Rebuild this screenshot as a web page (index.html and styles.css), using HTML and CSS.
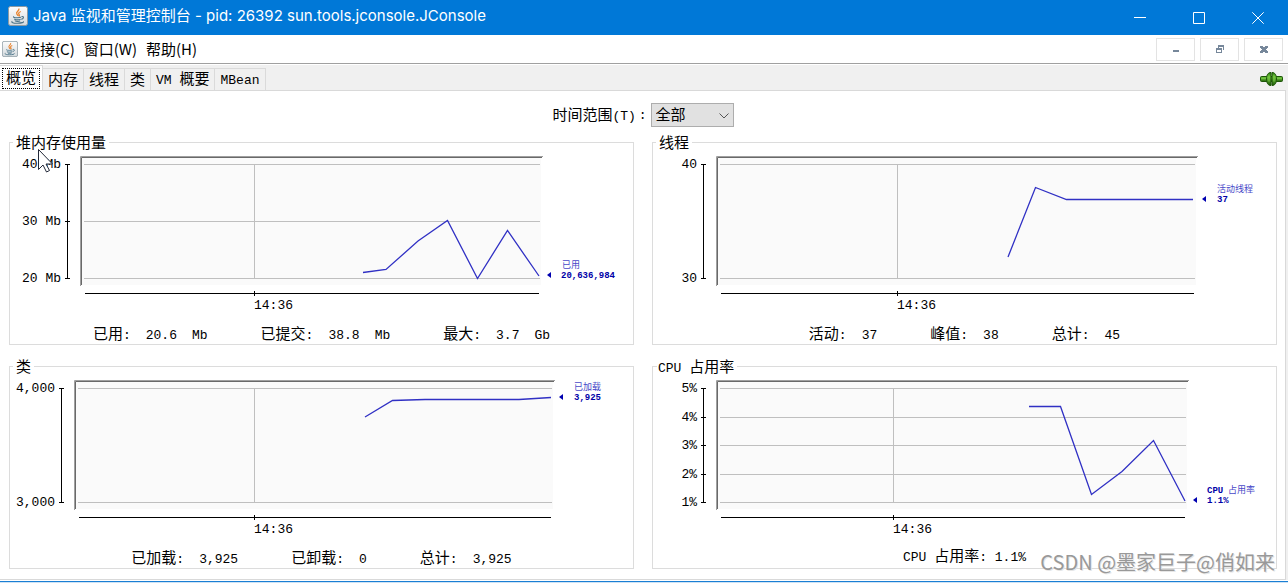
FILE: index.html
```html
<!DOCTYPE html>
<html lang="zh-CN">
<head>
<meta charset="utf-8">
<title>Java 监视和管理控制台</title>
<link rel="stylesheet" href="styles.css">
</head>
<body>
<svg class="defs" aria-hidden="true">
  <defs>
    <linearGradient id="cup-bg" x1="0" y1="0" x2="0" y2="1"><stop offset="0" stop-color="#fdfdfd"/><stop offset="1" stop-color="#d3d9dd"/></linearGradient>
    <linearGradient id="plug-bg" x1="0" y1="0" x2="0" y2="1"><stop offset="0" stop-color="#2f7d12"/><stop offset=".35" stop-color="#6cc03a"/><stop offset="1" stop-color="#1f5c0a"/></linearGradient>
    <symbol id="java" viewBox="0 0 20 20">
      <rect x=".5" y=".5" width="19" height="19" rx="2" fill="url(#cup-bg)" stroke="#8c9aa3"/>
      <path d="M10.8 2.5c1.2 2.2-3.4 3.4-2 5.400.4.700 1 1.200 1.200 2M12.800 5.500c-2.400 1-2.600 2-1.600 3.200.6.800.2 1.300-.4 1.800" fill="none" stroke="#e8822c" stroke-width="1.300"/>
      <path d="M6 10.500c-1.500.8 1 1.300 3.500 1.200s3.500-.4 3.500-.4M6.600 12.700c-.6 1.400 4.800 1.600 6 .5M7 14.500c0 1.300 4 1.200 5.200.4M13.500 10.600c3-.6 2.300 2.300-.3 2.700M4.300 15.300c-1.600 1 1 2 5.200 1.900s6.600-.8 5.800-1.800" fill="none" stroke="#4a7388" stroke-width="1.100"/>
    </symbol>
  </defs>
</svg>

<header class="titlebar">
  <svg class="title-icon"><use href="#java"/></svg>
  <h1 class="title">Java 监视和管理控制台 - pid: 26392 sun.tools.jconsole.JConsole</h1>
  <div class="window-buttons">
    <button class="wbtn" aria-label="最小化"><svg width="12" height="12"><path d="M0 5.500h12"/></svg></button>
    <button class="wbtn" aria-label="最大化"><svg width="12" height="12"><path d="M.5.500h11v11H.5z"/></svg></button>
    <button class="wbtn" aria-label="关闭"><svg width="12" height="12"><path d="M.3.300l11.400 11.400M11.700.300L.3 11.700"/></svg></button>
  </div>
</header>

<nav class="menubar">
  <svg class="menu-icon"><use href="#java"/></svg>
  <button class="menu">连接(C)</button>
  <button class="menu">窗口(W)</button>
  <button class="menu">帮助(H)</button>
  <div class="frame-buttons">
    <button class="fbtn" aria-label="最小化窗格"><svg width="8" height="8"><path d="M1 5h6v2H1z"/></svg></button>
    <button class="fbtn" aria-label="还原窗格"><svg width="8" height="8"><path fill-rule="evenodd" d="M2 0h6v5H7V2H3v1H2zM0 3h6v5H0zM1 5v2h4V5z"/></svg></button>
    <button class="fbtn" aria-label="关闭窗格"><svg width="8" height="8"><path d="M0 1h3v1h2V1h3v2H7v1H6v1h1v1h1v2H5V7H3v1H0V6h1V5h1V4H1V3H0z"/></svg></button>
  </div>
</nav>

<div class="tabstrip">
  <div class="tabs" role="tablist">
    <button class="tab tab-selected" role="tab" aria-selected="true"><span class="focus">概览</span></button>
    <button class="tab" role="tab">内存</button>
    <button class="tab" role="tab">线程</button>
    <button class="tab" role="tab">类</button>
    <button class="tab" role="tab"><span class="mono">VM </span>概要</button>
    <button class="tab" role="tab"><span class="mono">MBean</span></button>
  </div>
  <svg class="plug" width="23" height="14" viewBox="0 0 23 14">
    <rect x=".5" y="4.500" width="22" height="5" rx="1" fill="url(#plug-bg)" stroke="#1d5508"/>
    <path d="M1.500 6h20" stroke="#7fce4d"/>
    <path d="M11 .500C8 .500 6.500 3 6.500 7s1.500 6.500 4.500 6.500zM12 .500c3 0 4.500 2.500 4.500 6.500s-1.500 6.500-4.500 6.500z" fill="url(#plug-bg)" stroke="#1d5508"/>
    <path d="M9 3.500v6M14 3.500v6" stroke="#79c944"/>
  </svg>
</div>

<main class="content">
  <div class="range">
    <label for="range">时间范围<span class="mono">(T)</span></label><span class="mono colon">:</span>
    <div class="select-box">
      <select id="range"><option>全部</option></select>
      <svg class="chevron" width="10" height="6"><path d="M.5.500L5 5 9.500.500"/></svg>
    </div>
  </div>

  <div class="panels">
    <fieldset class="panel">
      <legend>堆内存使用量</legend>
      <svg class="chart" viewBox="10 151 623 165">
        <rect class="plot" x="82" y="158" width="459" height="127"/>
        <path class="bevel-out" d="M80.500 286V156.500H543"/><path class="bevel-in" d="M81.500 285V157.500H542"/>
        <path class="grid" d="M84 164.500h456M84 221.500h456M84 278.500h456M254.500 164v114"/>
        <path class="axis" d="M65 164.500h5M65 221.500h5M65 278.500h5M67.500 164v115M85 293.500h454M254.500 291v5"/>
        <text class="tick" x="61" y="168">40 Mb</text><text class="tick" x="61" y="225">30 Mb</text><text class="tick" x="61" y="282">20 Mb</text>
        <text class="time" x="254" y="309">14:36</text>
        <polyline class="series" points="363,272.500 386,269.500 418,241 447.500,220.500 477.500,278.500 507.500,230.500 539,276"/>
        <path class="arrow" d="M547 275l4-3v6z"/>
        <text class="key" x="562" y="268">已用</text><text class="keyval" x="561" y="278">20,636,984</text>
      </svg>
      <dl class="stats">
        <div><dt>已用<span class="mono">:</span></dt><dd>20.6</dd><dd>Mb</dd></div>
        <div><dt>已提交<span class="mono">:</span></dt><dd>38.8</dd><dd>Mb</dd></div>
        <div><dt>最大<span class="mono">:</span></dt><dd>3.7</dd><dd>Gb</dd></div>
      </dl>
    </fieldset>

    <fieldset class="panel">
      <legend>线程</legend>
      <svg class="chart" viewBox="653 151 623 165">
        <rect class="plot" x="718" y="158" width="478" height="127"/>
        <path class="bevel-out" d="M716.500 286V156.500H1198"/><path class="bevel-in" d="M717.500 285V157.500H1197"/>
        <path class="grid" d="M720 164.500h475M720 278.500h475M897.500 164v114"/>
        <path class="axis" d="M701 164.500h5M701 278.500h5M703.500 164v115M721 293.500h473M897.500 291v5"/>
        <text class="tick" x="697" y="168">40</text><text class="tick" x="697" y="282">30</text>
        <text class="time" x="897" y="309">14:36</text>
        <polyline class="series" points="1008,257 1035.500,187.500 1066.500,199.500 1193,199.500"/>
        <path class="arrow" d="M1202 199l4-3v6z"/>
        <text class="key" x="1217" y="192">活动线程</text><text class="keyval" x="1217" y="202">37</text>
      </svg>
      <dl class="stats">
        <div><dt>活动<span class="mono">:</span></dt><dd>37</dd></div>
        <div><dt>峰值<span class="mono">:</span></dt><dd>38</dd></div>
        <div><dt>总计<span class="mono">:</span></dt><dd>45</dd></div>
      </dl>
    </fieldset>

    <fieldset class="panel">
      <legend>类</legend>
      <svg class="chart" viewBox="10 375 623 165">
        <rect class="plot" x="76" y="382" width="477" height="127"/>
        <path class="bevel-out" d="M74.500 510V380.500H555"/><path class="bevel-in" d="M75.500 509V381.500H554"/>
        <path class="grid" d="M78 388.500h474M78 502.500h474M254.500 388v114"/>
        <path class="axis" d="M59 388.500h5M59 502.500h5M61.500 388v115M79 517.500h472M254.500 515v5"/>
        <text class="tick" x="55" y="392">4,000</text><text class="tick" x="55" y="506">3,000</text>
        <text class="time" x="254" y="533">14:36</text>
        <polyline class="series" points="365,417 392.500,400.500 425,399.500 519,399.500 551,397.500"/>
        <path class="arrow" d="M559 397l4-3v6z"/>
        <text class="key" x="574" y="390">已加载</text><text class="keyval" x="574" y="400">3,925</text>
      </svg>
      <dl class="stats">
        <div><dt>已加载<span class="mono">:</span></dt><dd>3,925</dd></div>
        <div><dt>已卸载<span class="mono">:</span></dt><dd>0</dd></div>
        <div><dt>总计<span class="mono">:</span></dt><dd>3,925</dd></div>
      </dl>
    </fieldset>

    <fieldset class="panel">
      <legend class="legend-latin"><span class="mono">CPU </span>占用率</legend>
      <svg class="chart" viewBox="653 375 623 165">
        <rect class="plot" x="718" y="382" width="469" height="127"/>
        <path class="bevel-out" d="M716.500 510V380.500H1189"/><path class="bevel-in" d="M717.500 509V381.500H1188"/>
        <path class="grid" d="M720 388.500h466M720 417.500h466M720 445.500h466M720 474.500h466M720 502.500h466M893.500 388v114"/>
        <path class="axis" d="M701 388.500h5M701 417.500h5M701 445.500h5M701 474.500h5M701 502.500h5M703.500 388v115M721 517.500h464M893.500 515v5"/>
        <text class="tick" x="697" y="392">5%</text><text class="tick" x="697" y="421">4%</text><text class="tick" x="697" y="449">3%</text><text class="tick" x="697" y="478">2%</text><text class="tick" x="697" y="506">1%</text>
        <text class="time" x="893" y="533">14:36</text>
        <polyline class="series" points="1029,406.500 1060.500,406.500 1091.500,494.500 1122,471.500 1153.500,440.500 1185,501"/>
        <path class="arrow" d="M1193 500l4-3v6z"/>
        <text class="keyval" x="1207" y="493">CPU</text><text class="key" x="1228" y="493">占用率</text><text class="keyval" x="1207" y="503">1.1%</text>
      </svg>
      <p class="stats stats-single"><span><span class="mono">CPU </span>占用率<span class="mono">: 1.1%</span></span></p>
    </fieldset>
  </div>
</main>
<footer class="edge"></footer>

<div class="watermark">CSDN @墨家巨子@俏如来</div>
<svg class="pointer" width="16" height="24" viewBox="0 0 16 24"><path d="M.5.500v20l4.500-4.500 3.500 7 3-1.500-3.500-6.500h6.500z" fill="#fff" stroke="#222838"/></svg>
</body>
</html>
```
FILE: styles.css
```css
* { box-sizing: border-box; }
body {
  margin: 0;
  min-height: 100vh;
  position: relative;
  background: #fff;
  color: #000;
  font: 15px/17px "Noto Sans CJK SC", sans-serif;
}
button { font: inherit; color: inherit; margin: 0; padding: 0; border: 0; background: none; }
.defs { position: absolute; width: 0; height: 0; }
.mono, .stats dd {
  font-family: "Liberation Mono", monospace;
  font-size: 13px;
  white-space: pre;
}

.titlebar { display: flex; align-items: center; height: 35px; padding-left: 8px; background: #0078d7; color: #fff; }
.title-icon { width: 20px; height: 20px; margin-bottom: 4px; }
.title { margin: 0 0 3px 5px; font: 400 15px/22px Inter, "Noto Sans CJK SC", sans-serif; white-space: nowrap; }
.window-buttons { display: flex; margin-left: auto; padding-right: 1px; }
.wbtn { display: grid; place-items: center; width: 59px; height: 33px; }
.wbtn svg { fill: none; stroke: #fff; }

.menubar { display: flex; align-items: center; height: 29px; padding: 0 5px 0 2px; border-bottom: 1px solid #a0a0a0; }
.menu-icon { width: 16px; height: 16px; margin-right: 7px; }
.menu { margin-right: 9px; padding-bottom: 1px; white-space: nowrap; }
.frame-buttons { display: flex; gap: 5px; margin-left: auto; }
.fbtn { display: grid; place-items: center; width: 39px; height: 23px; border: 1px solid #e3e3e3; }
.fbtn svg { fill: #76879a; }

.tabstrip { display: flex; align-items: flex-end; height: 25px; margin-top: 1px; padding-right: 5px; background: #f0f0f0; }
.tabs { display: flex; align-items: flex-end; align-self: stretch; }
.tab { height: 22px; padding: 0 5px 2px; border: 1px solid #dadada; border-left: 0; border-bottom: 0; white-space: nowrap; }
.tab-selected { height: 25px; padding: 2px 2px 1px 2px; background: #fff; }
.focus { display: block; height: 21px; padding: 0 3px; border: 1px dotted #000; line-height: 16px; }
.plug { margin: 0 0 4px auto; }

.content { margin-right: 2px; padding: 0 8px 10px 9px; border: 1px solid #d9d9d9; border-left: 0; box-shadow: 2px 0 #f0f0f0; }
.range { display: flex; justify-content: center; align-items: center; padding: 12px 0 7px; }
.colon { margin: 0 4px 0 3px; }
.select-box { position: relative; }
select { appearance: none; display: block; width: 83px; height: 24px; padding: 0 4px 3px; border: 1px solid #adadad; border-radius: 0; background: #e1e1e1; color: #000; font: inherit; }
.chevron { position: absolute; right: 5px; top: 10px; fill: none; stroke: #555; pointer-events: none; }

.panels { display: grid; grid-template-columns: 1fr 1fr; gap: 13px 18px; }
.panel { min-width: 0; margin: 0; padding: 0; border: 1px solid #dcdcdc; }
legend { height: 17px; margin-left: 3px; padding: 0 3px; line-height: 15px; }
.legend-latin { margin-left: 4px; padding: 0 3px 0 1px; }
.chart { display: block; width: 100%; height: auto; }
.plot { fill: #fafafa; }
.bevel-out { fill: none; stroke: #a0a0a0; }
.bevel-in { fill: none; stroke: #696969; }
.grid { fill: none; stroke: #bfbfbf; }
.axis { fill: none; stroke: #000; }
.series { fill: none; stroke: #3030c4; stroke-width: 1.3; }
.arrow { fill: #0000b0; }
.tick, .time { font: 13px "Liberation Mono", monospace; }
.tick { text-anchor: end; }
.key { font: 9px "Noto Sans CJK SC", sans-serif; fill: #4848c8; }
.keyval { font: bold 9px "Liberation Mono", monospace; fill: #0000a8; }

.stats { display: flex; justify-content: center; gap: 53px; height: 28px; margin: 0; padding-top: 8px; }
.stats div { display: flex; align-items: baseline; gap: 15px; }
.stats dd { margin: 0; }
.stats-single { padding-top: 6px; }

.edge { height: 3px; border-top: 1px solid #fff; border-bottom: 1px solid #cfe3f5; background: #1a7fd4; }
.watermark { position: absolute; right: 13px; bottom: 7px; font-size: 20px; line-height: 28px; color: #999; text-shadow: 1px 1px #e6e6e6; white-space: nowrap; }
.pointer { position: absolute; left: 38px; top: 149px; }
```
